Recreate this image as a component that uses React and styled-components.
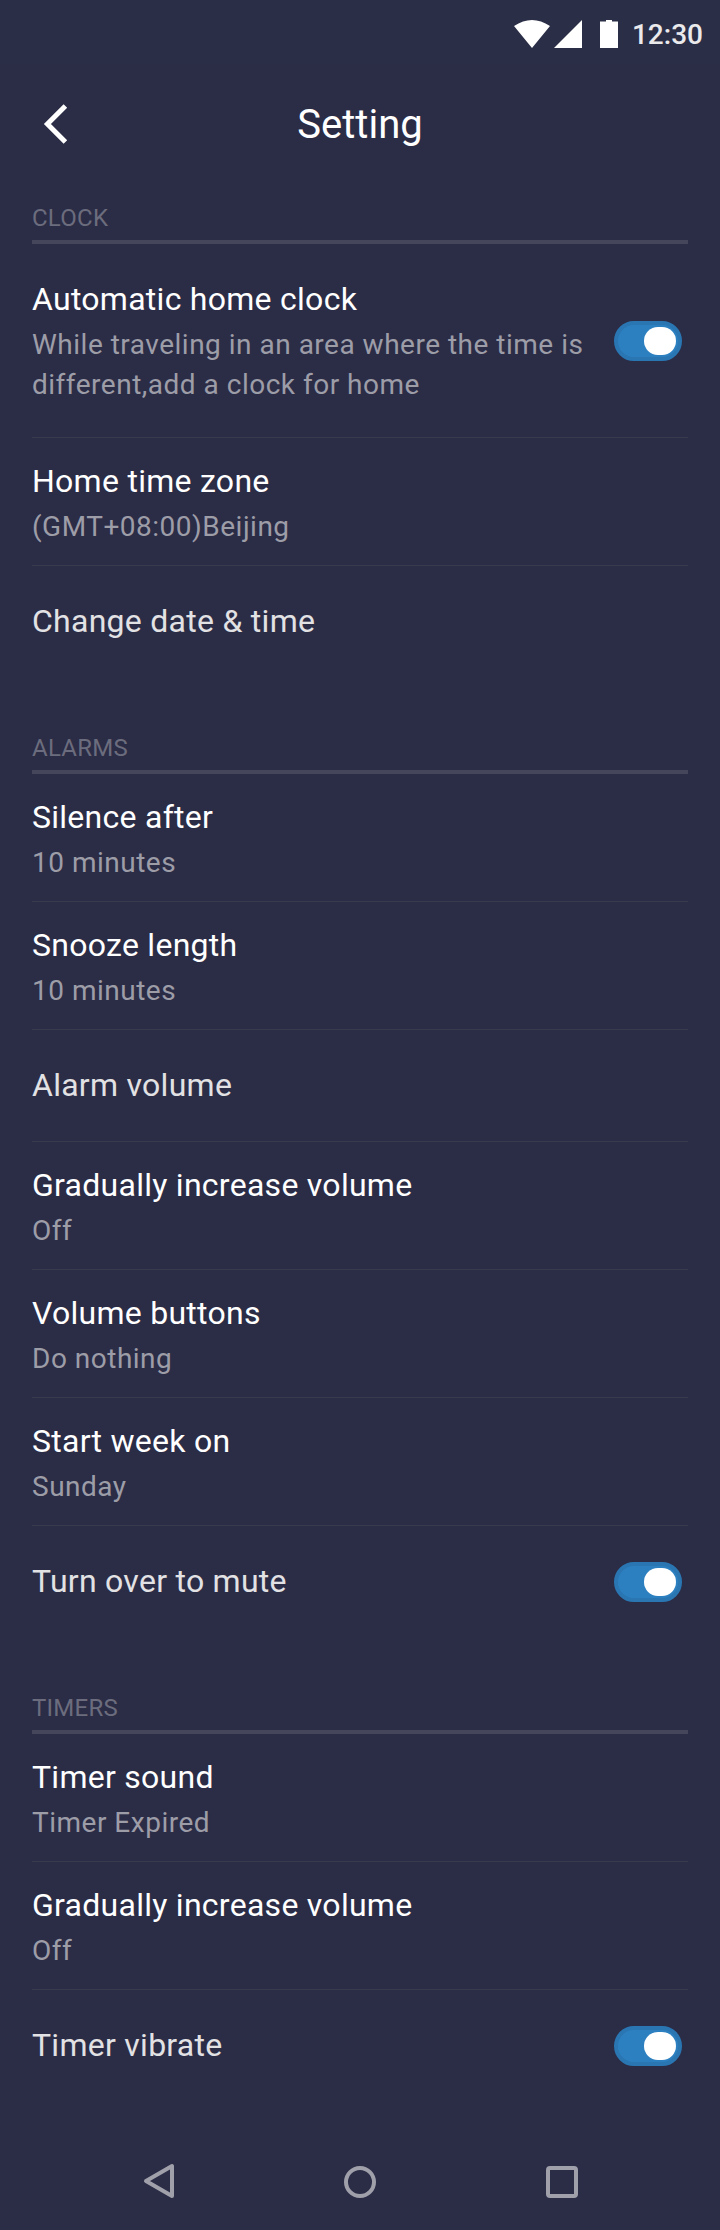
import React from 'react';
import styled, { createGlobalStyle } from 'styled-components';

const Global = createGlobalStyle`
  body { margin: 0; background: #2b2c46; }
  * { box-sizing: border-box; }
`;
const Screen = styled.div`
  width: 720px; height: 2230px; background: #2b2c46; color: #fff;
  font-family: Roboto, sans-serif; display: flex; flex-direction: column;
`;
const StatusBar = styled.div`
  height: 64px; display: flex; align-items: center; justify-content: flex-end;
  padding: 4px 17px 0 0; font-size: 28px; font-weight: 500; color: #eaeaed; background: #2a2e47;
`;
const StatusIcons = styled.svg` margin-right: 14px; `;
const Header = styled.header`
  height: 116px; padding-top: 4px;
  display: grid; grid-template-columns: 112px 1fr 112px; align-items: center;
`;
const Back = styled.svg` margin-left: 40px; `;
const Title = styled.h1`
  margin: 0; padding-top: 2px; text-align: center; font-size: 40px; font-weight: 400; line-height: 48px;
`;
const Section = styled.section`
  height: ${p => p.$h}px; padding: 0 32px;
`;
const SectionTitle = styled.h2`
  margin: 0; height: 64px; padding-top: 22px; border-bottom: 4px solid #45465b;
  font-size: 24px; line-height: 32px; font-weight: 400; letter-spacing: 0.24px; color: #6b6c7d;
`;
const Row = styled.div`
  height: ${p => p.$h}px; display: flex; align-items: center; justify-content: space-between;
  padding-right: 6px;
  box-shadow: ${p => (p.$last ? 'none' : 'inset 0 -1px #383a4e')};
`;
const RowText = styled.div`
  align-self: flex-start; padding-top: ${p => p.$top}px;
`;
const Label = styled.div`
  font-size: 32px; line-height: 40px; letter-spacing: 0.27px; color: ${p => (p.$dim ? '#e2e2e4' : '#fff')};
`;
const Detail = styled.div`
  font-size: 28px; line-height: 40px; letter-spacing: 0.5px; margin-top: 5.5px; color: #9d9da8; white-space: pre;
`;
const Toggle = styled.div`
  width: 68px; height: 40px; border-radius: 20px; background: #2d80c0; border: 4px solid #2976b3;
  display: flex; align-items: center; justify-content: flex-end; padding-right: 2px;
`;
const Knob = styled.div` width: 32px; height: 28px; border-radius: 14px; background: #fff; `;
const NavBar = styled.svg` display: block; `;

const sections = [
  { title: 'CLOCK', h: 530, rows: [
    { label: 'Automatic home clock', detail: 'While traveling in an area where the time is\ndifferent,add a clock for home', h: 194, top: 35, on: true },
    { label: 'Home time zone', detail: '(GMT+08:00)Beijing', h: 128 },
    { label: 'Change date & time', h: 112, top: 35, last: true } ] },
  { title: 'ALARMS', h: 960, rows: [
    { label: 'Silence after', detail: '10 minutes', h: 128 },
    { label: 'Snooze length', detail: '10 minutes', h: 128 },
    { label: 'Alarm volume', h: 112, top: 35 },
    { label: 'Gradually increase volume', detail: 'Off', h: 128 },
    { label: 'Volume buttons', detail: 'Do nothing', h: 128 },
    { label: 'Start week on', detail: 'Sunday', h: 128 },
    { label: 'Turn over to mute', h: 112, top: 35, on: true, last: true } ] },
  { title: 'TIMERS', h: 464, rows: [
    { label: 'Timer sound', detail: 'Timer Expired', h: 128 },
    { label: 'Gradually increase volume', detail: 'Off', h: 128 },
    { label: 'Timer vibrate', h: 112, top: 35, on: true, last: true } ] },
];

export default function App() {
  return (
    <Screen>
      <Global />
      <StatusBar>
        <StatusIcons width="104" height="28" fill="#fff">
          <path d="M0 6Q18-6 36 6L18 28ZM40 28L68 0V28ZM86 1.5h6V0h6v1.5h6V28H86Z" />
        </StatusIcons>
        12:30
      </StatusBar>
      <Header>
        <Back width="32" height="40" fill="none" stroke="#fff" strokeWidth="5"><path d="M25.4 1.9L7.4 20L25.4 38.1" /></Back>
        <Title>Setting</Title>
      </Header>
      {sections.map(s => (
        <Section key={s.title} $h={s.h}>
          <SectionTitle>{s.title}</SectionTitle>
          {s.rows.map(r => (
            <Row key={r.label} $h={r.h} $last={r.last}>
              <RowText $top={r.top || 23}>
                <Label $dim={!r.detail}>{r.label}</Label>
                {r.detail && <Detail>{r.detail}</Detail>}
              </RowText>
              {r.on && <Toggle><Knob /></Toggle>}
            </Row>
          ))}
        </Section>
      ))}
      <NavBar width="720" height="96" fill="none" stroke="#a0a0ab" strokeWidth="4" strokeLinejoin="round">
        <path d="M146 47L172 32V62Z" /><circle cx="360" cy="48" r="14" /><rect x="548" y="34" width="28" height="28" rx="2" />
      </NavBar>
    </Screen>
  );
}
